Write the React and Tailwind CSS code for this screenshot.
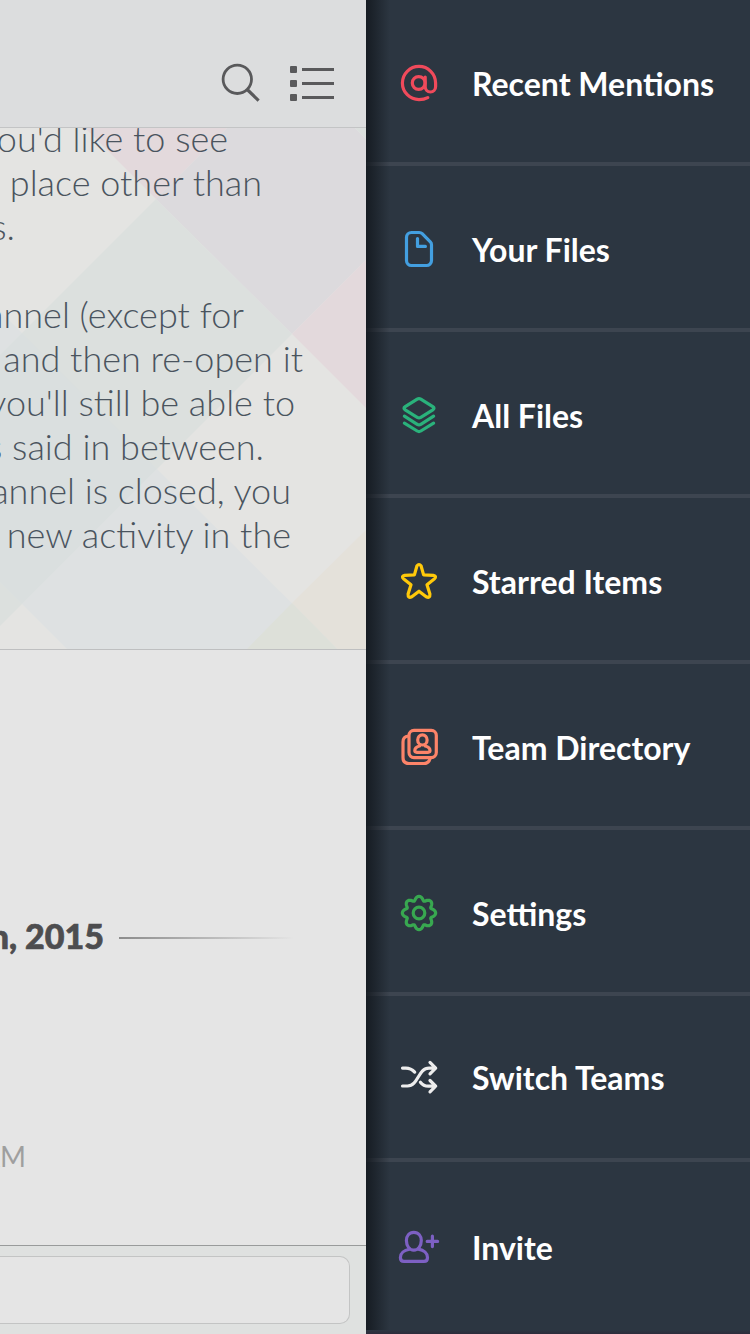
import React from 'react';

const gearPath =
  Array.from({ length: 145 }, (_, i) => {
    const t = (i / 144) * Math.PI * 2;
    const c = Math.cos(8 * t);
    const r = 14.7 + 1.95 * c;
    const a = t - Math.PI / 2 + 0.035 * Math.sin(8 * t);
    return `${i ? 'L' : 'M'}${(29 + r * Math.cos(a)).toFixed(2)} ${(33 + r * Math.sin(a)).toFixed(2)}`;
  }).join('') + 'Z';

const items = [
  {
    label: 'Recent Mentions', color: '#f04a5b', box: '0 0 60 60',
    icon: (
      <>
        <circle cx="28.7" cy="33" r="6.4" />
        <path d="M35.2 27v9.8a5.2 5.2 0 0 0 10.4 0V33A16.6 16.6 0 1 0 29 49.6Q34 49.6 37.8 47.6" />
      </>
    ),
  },
  {
    label: 'Your Files', color: '#439fe0', box: '0 -4 60 60',
    icon: <path d="M21.5 12.5h7.8q1.7 0 2.9 1.2l8.1 8.1q1.2 1.2 1.2 2.9V40.5a5 5 0 0 1-5 5h-15a5 5 0 0 1-5-5v-23a5 5 0 0 1 5-5ZM27.5 18.5v7.9h7.9" />,
  },
  {
    label: 'All Files', color: '#2ab27b', box: '0 -3 60 60',
    icon: (
      <>
        <path d="M27.2 14.1Q29 13 30.8 14.1L42.8 21.6Q45.2 23.2 42.8 24.8L30.8 32.3Q29 33.4 27.2 32.3L15.2 24.8Q12.8 23.2 15.2 21.6Z" />
        <path d="M14.4 31.1L27.2 39.3Q29 40.4 30.8 39.3L43.6 31.1M14.4 38.1L27.2 46Q29 47.1 30.8 46L43.6 38.1" />
      </>
    ),
  },
  {
    label: 'Starred Items', color: '#ffc90a', box: '0 -2 60 60',
    icon: <path d="M26.9 16Q29 13 31.1 16L33.6 24.9L43.3 25.3Q47.3 26.3 44.2 29L37 34.7L39.9 44Q40.2 48.7 36.2 46.8L29 41.2L21.8 46.8Q17.8 48.7 18.1 44L21 34.7L13.8 29Q10.7 26.3 14.7 25.3L24.4 24.9Z" />,
  },
  {
    label: 'Team Directory', color: '#fc8469', box: '0 -1 60 60',
    icon: (
      <>
        <rect x="19" y="15.4" width="27.3" height="27.2" rx="5" />
        <path d="M18.3 21Q13 21.5 13 27v15.5q0 6 6 6h15q5 0 6.2-5.3" />
        <ellipse cx="32.4" cy="24.9" rx="4.7" ry="5.1" />
        <path d="M29.6 31C26.2 31.8 24.8 33.6 24.8 35.6Q24.8 37.3 26.8 37.3H38Q40 37.3 40 35.6C40 33.6 38.6 31.8 35.2 31" />
      </>
    ),
  },
  {
    label: 'Settings', color: '#38a850', box: '0 0 60 60',
    icon: (
      <>
        <circle cx="29" cy="33" r="5.8" />
        <path d={gearPath} />
      </>
    ),
  },
  {
    label: 'Switch Teams', color: '#ededed', box: '0 1 60 60', lift: true,
    icon: <path d="M12.5 23.1h3.3Q21 23.1 24.7 27.1M12.5 41h5C28.5 41 28 23.1 39 23.1H45.4M40 17.4L45.7 23.1L40 28.8M30.4 37.2Q33.5 41.2 38.2 41.2H45.4M40 35.5L45.7 41.2L40 46.9" />,
  },
  {
    label: 'Invite', color: '#7d60c3', box: '0 -3 60 60', drop: true,
    icon: (
      <>
        <path d="M23.8 17.3C19.2 17.3 16.4 21 16.4 25.6C16.4 30.8 19.5 35.2 23.8 35.2S31.3 30.8 31.3 25.6C31.3 21 28.5 17.3 23.8 17.3Z" />
        <path d="M19.4 34.2C14 35.2 10.4 38.4 10.4 42.4Q10.4 46.3 14 46.3H34Q37.5 46.3 37.5 42.4C37.5 38.4 34 35.2 28.4 34.2" />
        <path d="M42.4 21.2v10.4M37.2 26.4h10.4" />
      </>
    ),
  },
];

function Line({ width, children }) {
  return <div className={`flex h-11 justify-end whitespace-nowrap ${width}`}><span>{children}</span></div>;
}

function Header() {
  return (
    <header className="flex h-32 items-start border-b border-[#c3c4c5] bg-[#dcddde]">
      <svg className="ml-[216px] mt-[60px] h-[48px] w-[124px]" viewBox="216 60 124 48" fill="none" stroke="#59595b" strokeWidth="2.8">
        <circle cx="237.3" cy="79.3" r="14.2" />
        <path d="M247.2 89.5L258.6 100.6" strokeWidth="3.2" />
        <path d="M302 69.5h32M302 83.5h32M302 97.5h32" strokeWidth="3" />
        <g fill="#59595b" stroke="none">
          <rect x="290" y="66" width="7" height="7" rx="1" />
          <rect x="290" y="80" width="7" height="7" rx="1" />
          <rect x="290" y="94" width="7" height="7" rx="1" />
        </g>
      </svg>
    </header>
  );
}

function Pattern() {
  return (
    <svg className="absolute inset-0 h-[521px] w-[366px]" viewBox="0 128 366 521">
      <path d="M85 128H227L156 199Z" fill="#e3d9dc" />
      <path d="M227 128H355L366 139V260L292 334L156 199Z" fill="#dcdadd" />
      <path d="M355 128H366V139Z" fill="#dbdfdd" />
      <path d="M366 260V408L292 334Z" fill="#e3d9dc" />
      <path d="M156 199L292 334L0 626V355Z" fill="#dce0de" />
      <path d="M0 311L22 333L0 355Z" fill="#dee1e2" />
      <path d="M0 355L22 333L157 469L22 604L0 582Z" fill="#dadfdf" />
      <path d="M157 469L338 649H67L22 604Z" fill="#dee1e2" />
      <path d="M366 530V649H337L292 603Z" fill="#e4e1da" />
      <path d="M292 603L337 649H247Z" fill="#dde0d9" />
    </svg>
  );
}

function Conversation() {
  return (
    <main className="flex h-[1334px] w-[366px] shrink-0 flex-col overflow-hidden bg-[#e5e5e5]">
      <Header />
      <section className="relative h-[522px] overflow-hidden border-b border-[#bebfc0] bg-[#e4e4e2]">
        <Pattern />
        <div className="relative -mt-3 text-[36px] font-light leading-[44px] text-[#4a545e]">
          <Line width="w-[228px]">you'd like to see</Line>
          <Line width="w-[262px]">place other than</Line>
          <Line width="w-[15px]">s.</Line>
          <div className="h-11" />
          <Line width="w-[244px]">channel (except for</Line>
          <Line width="w-[303px]">and then re-open it</Line>
          <Line width="w-[295px]">you'll still be able to</Line>
          <Line width="w-[264px]">was said in between.</Line>
          <Line width="w-[291px]">channel is closed, you</Line>
          <Line width="w-[291px]">new activity in the</Line>
        </div>
      </section>
      <section className="h-[595px]">
        <div className="flex h-[310px] items-start pt-[264px]">
          <div className="flex w-[104px] justify-end whitespace-nowrap text-[34px] font-black leading-[44px] text-[#4d4d4f] [-webkit-text-stroke:0.7px_#4d4d4f]">
            <span>th, 2015</span>
          </div>
          <div className="ml-[15px] mt-[23px] h-[2px] w-[175px] bg-gradient-to-r from-[#8c8c8c] to-[#e5e5e5]" />
        </div>
        <div className="mt-[176px] flex w-[26px] justify-end whitespace-nowrap text-[28px] leading-10 text-[#9f9f9f]">
          <span>AM</span>
        </div>
      </section>
      <footer className="h-[89px] border-t border-[#999b9b] bg-[#dfe1e0] pr-4 pt-[10px]">
        <div className="h-[68px] rounded-r-[10px] border border-l-0 border-[#c3c4c4] bg-[#e5e5e5]" />
      </footer>
    </main>
  );
}

function Menu() {
  return (
    <nav className="relative h-[1334px] flex-1 overflow-hidden bg-[#2c3641]">
      {items.map(({ label, color, box, icon, lift, drop }) => (
        <div key={label} className="flex h-[166px] items-start border-b-4 border-[#3d4550] last-of-type:border-transparent">
          <svg className="ml-6 mt-[50px] h-[60px] w-[60px] shrink-0" viewBox={box} fill="none" stroke={color} strokeWidth="3.2" strokeLinecap="round" strokeLinejoin="round">
            {icon}
          </svg>
          <span className={`ml-[22px] whitespace-nowrap text-[32px] font-bold leading-10 text-white ${lift ? 'mt-[62px]' : drop ? 'mt-[66px]' : 'mt-[64px]'}`}>
            {label}
          </span>
        </div>
      ))}
      <span className="absolute inset-y-0 left-0 w-6 bg-gradient-to-r from-[#12171d]/85 to-transparent" />
      <span className="absolute inset-x-0 bottom-0 h-1 bg-gradient-to-b from-[#2c3641] to-[#2d2b3b]" />
    </nav>
  );
}

export default function App() {
  return (
    <div className="flex h-[1334px] w-[750px] overflow-hidden font-['Lato',sans-serif]">
      <Conversation />
      <Menu />
    </div>
  );
}
